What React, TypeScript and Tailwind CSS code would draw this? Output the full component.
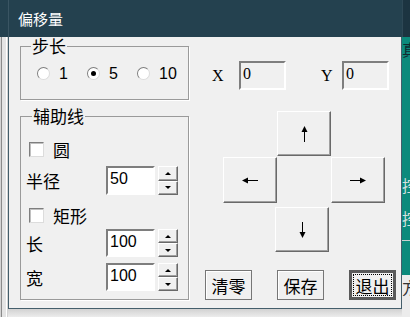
import React from "react";

const cjk = "font-['Noto_Sans_CJK_SC',sans-serif]";
const raised =
  "bg-[#f0f0f0] border border-t-white border-l-white border-r-[#696969] border-b-[#696969] shadow-[inset_-1px_-1px_0_#a0a0a0]";
const sunken =
  "border-2 border-t-[#7e7e7e] border-l-[#7e7e7e] border-r-white border-b-white";

const ArrowUp = () => (
  <svg width="7" height="16" viewBox="0 0 7 16">
    <line x1="3.5" y1="4" x2="3.5" y2="16" stroke="black" strokeWidth="1" />
    <polygon points="3.5,0 0.5,6 6.5,6" fill="black" />
  </svg>
);

const ArrowDown = () => (
  <svg width="7" height="16" viewBox="0 0 7 16">
    <line x1="3.5" y1="0" x2="3.5" y2="12" stroke="black" strokeWidth="1" />
    <polygon points="3.5,16 0.5,10 6.5,10" fill="black" />
  </svg>
);

const ArrowLeft = () => (
  <svg width="16" height="7" viewBox="0 0 16 7">
    <line x1="4" y1="3.5" x2="16" y2="3.5" stroke="black" strokeWidth="1" />
    <polygon points="0,3.5 6,0.5 6,6.5" fill="black" />
  </svg>
);

const ArrowRight = () => (
  <svg width="16" height="7" viewBox="0 0 16 7">
    <line x1="0" y1="3.5" x2="12" y2="3.5" stroke="black" strokeWidth="1" />
    <polygon points="16,3.5 10,0.5 10,6.5" fill="black" />
  </svg>
);

const Radio = ({ label, checked }: { label: string; checked?: boolean }) => (
  <div className="w-[50px] flex items-center">
    <div className="w-[13px] h-[13px] rounded-full bg-white border border-t-[#7e7e7e] border-l-[#7e7e7e] border-r-[#dcdcdc] border-b-[#dcdcdc] flex items-center justify-center">
      {checked && <div className="w-[5px] h-[5px] rounded-full bg-black" />}
    </div>
    <span className="ml-[9px] text-[16px] leading-none font-['Liberation_Sans',sans-serif] text-black">
      {label}
    </span>
  </div>
);

const Check = ({ label }: { label: string }) => (
  <div className="flex items-center ml-[8px] h-[15px]">
    <div className="w-[15px] h-[15px] bg-white border border-t-[#7e7e7e] border-l-[#7e7e7e] border-r-[#dcdcdc] border-b-[#dcdcdc] shadow-[inset_1px_1px_0_#c0c0c0]" />
    <span className={`ml-[9px] text-[17px] leading-none ${cjk}`}>{label}</span>
  </div>
);

const Spin = ({ label, value, h }: { label: string; value: string; h: string }) => (
  <div className={`flex items-center ${h}`}>
    <span className={`ml-[5px] w-[80px] text-[17px] leading-none ${cjk}`}>{label}</span>
    <div
      className={`w-[49px] h-full bg-white ${sunken} flex items-center pl-[2px] pb-[3px] text-[16px] leading-none font-['Liberation_Sans',sans-serif]`}
    >
      {value}
    </div>
    <div className="ml-[3px] w-[20px] h-full flex flex-col">
      <div className={`flex-1 ${raised} flex items-center justify-center`}>
        <div className="w-0 h-0 border-l-[3px] border-r-[3px] border-b-[3px] border-l-transparent border-r-transparent border-b-black" />
      </div>
      <div className={`flex-1 ${raised} flex items-center justify-center`}>
        <div className="w-0 h-0 border-l-[3px] border-r-[3px] border-t-[3px] border-l-transparent border-r-transparent border-t-black" />
      </div>
    </div>
  </div>
);

export default function App() {
  return (
    <div className="w-[410px] h-[317px] flex overflow-hidden bg-[#e8e8e8] text-black">
      {/* window behind, left edge */}
      <div className="w-[8px] flex flex-col">
        <div className="h-[37px] bg-[#24414f]" />
        <div className="flex-1 bg-[#d4d4d4] pl-[1px]">
          <div className="h-full w-[6px] border-l border-[#8a8a8a] bg-[#e4e4e4] border-r border-r-white" />
        </div>
      </div>

      {/* dialog */}
      <div className="w-[394px] flex flex-col">
        <div className={`h-[37px] bg-[#24414f] border-l border-[#3a5563] flex items-center pl-[9px] pb-[1px] text-white text-[15px] leading-none ${cjk}`}>
          偏移量
        </div>
        <div className="h-[272px] bg-[#f0f0f0] border-l border-r border-b border-[#445e6b] flex">
          {/* left column */}
          <div className="ml-[11px] w-[169px] flex flex-col">
            <div className="relative mt-[9px] h-[54px] border border-[#9a9a9a] shadow-[1px_1px_0_white] flex items-center pl-[16px] pt-[1px]">
              <span className={`absolute left-[10px] top-[-10px] px-[1px] bg-[#f0f0f0] text-[17px] leading-none ${cjk}`}>
                步长
              </span>
              <Radio label="1" />
              <Radio label="5" checked />
              <Radio label="10" />
            </div>

            <div className="relative mt-[16px] h-[184px] border border-[#9a9a9a] shadow-[1px_1px_0_white] flex flex-col">
              <span className={`absolute left-[11px] top-[-10px] px-[1px] bg-[#f0f0f0] text-[17px] leading-none ${cjk}`}>
                辅助线
              </span>
              <div className="mt-[25px]">
                <Check label="圆" />
              </div>
              <div className="mt-[9px]">
                <Spin label="半径" value="50" h="h-[29px]" />
              </div>
              <div className="mt-[13px]">
                <Check label="矩形" />
              </div>
              <div className="mt-[6px]">
                <Spin label="长" value="100" h="h-[28px]" />
              </div>
              <div className="mt-[6px]">
                <Spin label="宽" value="100" h="h-[28px]" />
              </div>
            </div>
          </div>

          {/* right column */}
          <div className="ml-[16px] w-[191px] flex flex-col">
            <div className="mt-[24px] h-[29px] flex items-center pl-[7px] font-['Liberation_Serif',serif] text-[16px] leading-none">
              <span className="w-[27px]">X</span>
              <div className={`w-[47px] h-full ${sunken} flex items-center pl-[2px] pb-[4px]`}>0</div>
              <span className="ml-[35px] w-[21px]">Y</span>
              <div className={`w-[47px] h-full ${sunken} flex items-center pl-[2px] pb-[4px]`}>0</div>
            </div>

            <div className="mt-[21px] ml-[18px] flex flex-col">
              <div className={`ml-[54px] w-[54px] h-[45px] ${raised} flex items-center justify-center`}>
                <ArrowUp />
              </div>
              <div className="mt-[1px] flex">
                <div className={`w-[54px] h-[46px] ${raised} flex items-center justify-center`}>
                  <ArrowLeft />
                </div>
                <div className={`ml-[54px] w-[54px] h-[46px] ${raised} flex items-center justify-center`}>
                  <ArrowRight />
                </div>
              </div>
              <div className={`mt-[4px] ml-[52px] w-[54px] h-[45px] ${raised} flex items-center justify-center`}>
                <ArrowDown />
              </div>
            </div>

            <div className={`mt-[18px] flex gap-[25px] text-[17px] leading-none ${cjk}`}>
              <div className="w-[47px] h-[30px] border border-[#767676] shadow-[inset_1px_1px_0_white] flex items-center justify-center">
                清零
              </div>
              <div className="w-[47px] h-[30px] border border-[#767676] shadow-[inset_1px_1px_0_white] flex items-center justify-center">
                保存
              </div>
              <div className="w-[47px] h-[30px] border-[3px] border-[#5a5a5a] p-[1px]">
                <div className="w-full h-full border border-dotted border-black flex items-center justify-center">
                  退出
                </div>
              </div>
            </div>
          </div>
        </div>
        <div className="flex-1 bg-gradient-to-b from-[#d2d2d2] to-[#ececec]" />
      </div>

      {/* window behind, right edge */}
      <div className={`w-[8px] flex flex-col overflow-hidden text-[16px] leading-none ${cjk}`}>
        <div className="h-[37px] bg-[#1c3441] border-l border-[#2e4856]" />
        <div className="h-[238px] bg-[#0c8a7c] flex flex-col text-[#d8e0e0]">
          <span className="mt-[4px] text-[#102a30]">真</span>
          <span className="mt-[120px]">控</span>
          <span className="mt-[17px]">控</span>
          <div className="mt-[14px] h-[1px] bg-[#c8d0d0]" />
        </div>
        <div className="flex-1 bg-[#ececec] pt-[4px]">
          <span className="text-[#333]">方</span>
        </div>
      </div>
    </div>
  );
}
